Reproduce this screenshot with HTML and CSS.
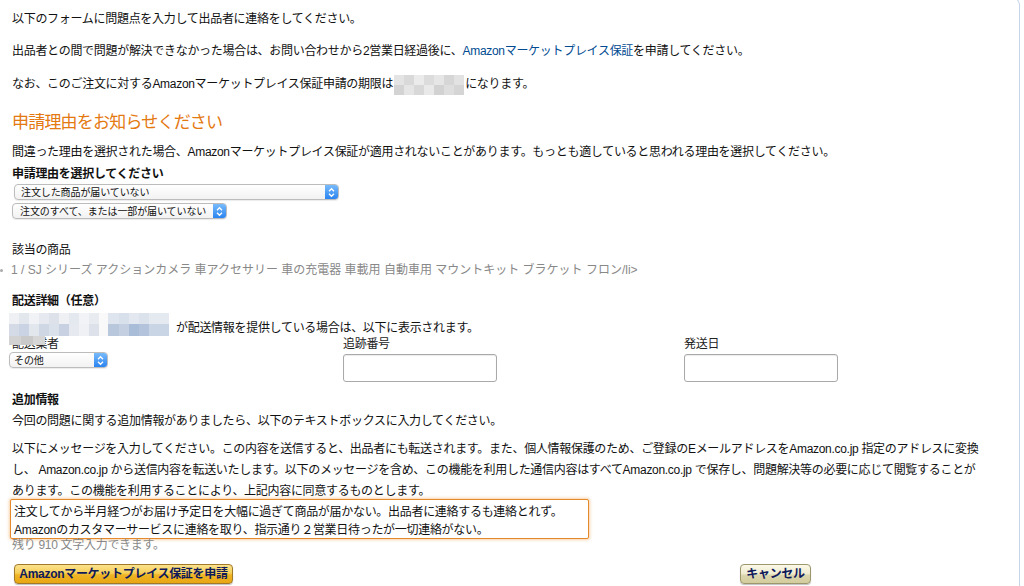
FILE: index.html
```html
<!DOCTYPE html>
<html lang="ja">
<head>
<meta charset="utf-8">
<title>Amazonマーケットプレイス保証</title>
<link rel="stylesheet" href="styles.css">
</head>
<body>
<div class="page">
  <p class="para">以下のフォームに問題点を入力して出品者に連絡をしてください。</p>
  <p class="para">出品者との間で問題が解決できなかった場合は、お問い合わせから2営業日経過後に、<a class="link" href="#">Amazonマーケットプレイス保証</a>を申請してください。</p>
  <p class="para">なお、このご注文に対するAmazonマーケットプレイス保証申請の期限は<span class="blur-date"></span>になります。</p>

  <h2 class="heading">申請理由をお知らせください</h2>
  <p class="note">間違った理由を選択された場合、Amazonマーケットプレイス保証が適用されないことがあります。もっとも適していると思われる理由を選択してください。</p>
  <p class="label-bold">申請理由を選択してください</p>
  <div class="select sel-reason"><span class="select-text">注文した商品が届いていない</span><span class="stepper"><svg viewBox="0 0 13 15" width="13" height="15"><path d="M4 6.2 L6.5 3.7 L9 6.2 M4 8.8 L6.5 11.3 L9 8.8" fill="none" stroke="#fff" stroke-width="1.3"/></svg></span></div>
  <div class="select sel-sub"><span class="select-text">注文のすべて、または一部が届いていない</span><span class="stepper"><svg viewBox="0 0 13 15" width="13" height="15"><path d="M4 6.2 L6.5 3.7 L9 6.2 M4 8.8 L6.5 11.3 L9 8.8" fill="none" stroke="#fff" stroke-width="1.3"/></svg></span></div>

  <p class="section-label">該当の商品</p>
  <p class="product"><span class="dot"></span>1 / SJ シリーズ アクションカメラ 車アクセサリー 車の充電器 車載用 自動車用 マウントキット ブラケット フロン/li&gt;</p>

  <p class="label-bold ship-title">配送詳細（任意）</p>
  <div class="seller-row">
    <span class="blur-name"></span>
    <span class="seller-text">が配送情報を提供している場合は、以下に表示されます。</span>
  </div>
  <div class="ship-grid">
    <div class="field carrier">
      <span class="field-label">配送業者</span>
      <span class="blur-label"></span>
      <div class="select sel-carrier"><span class="select-text">その他</span><span class="stepper"><svg viewBox="0 0 13 15" width="13" height="15"><path d="M4 6.2 L6.5 3.7 L9 6.2 M4 8.8 L6.5 11.3 L9 8.8" fill="none" stroke="#fff" stroke-width="1.3"/></svg></span></div>
    </div>
    <div class="field">
      <span class="field-label">追跡番号</span>
      <input class="text-input" type="text">
    </div>
    <div class="field">
      <span class="field-label">発送日</span>
      <input class="text-input" type="text">
    </div>
  </div>

  <p class="label-bold extra-title">追加情報</p>
  <p class="extra-note">今回の問題に関する追加情報がありましたら、以下のテキストボックスに入力してください。</p>
  <p class="message-note">以下にメッセージを入力してください。この内容を送信すると、出品者にも転送されます。また、個人情報保護のため、ご登録のEメールアドレスをAmazon.co.jp 指定のアドレスに変換<br>し、 Amazon.co.jp から送信内容を転送いたします。以下のメッセージを含め、この機能を利用した通信内容はすべてAmazon.co.jp で保存し、問題解決等の必要に応じて閲覧することが<br>あります。この機能を利用することにより、上記内容に同意するものとします。</p>
  <textarea class="message">注文してから半月経つがお届け予定日を大幅に過ぎて商品が届かない。出品者に連絡するも連絡とれず。
Amazonのカスタマーサービスに連絡を取り、指示通り２営業日待ったが一切連絡がない。</textarea>
  <p class="remaining">残り 910 文字入力できます。</p>

  <div class="actions">
    <button class="btn btn-primary" type="button">Amazonマーケットプレイス保証を申請</button>
    <button class="btn btn-cancel" type="button">キャンセル</button>
  </div>
</div>
</body>
</html>
```

FILE: styles.css
```css
html, body {
  margin: 0;
  padding: 0;
  background: #fff;
}

body {
  font-family: "Liberation Sans", "Noto Sans CJK JP", sans-serif;
  font-size: 12px;
  color: #111;
  overflow: hidden;
}

.page {
  width: 1020px;
  min-height: 600px;
  box-sizing: border-box;
  margin-top: -3px;
  padding: 13px 0 0 12px;
  border-top: 1px solid #c6d6ea;
  border-right: 1px solid #c6d6ea;
  border-top-right-radius: 8px;
  letter-spacing: -0.3px;
}

p {
  margin: 0;
  line-height: 16px;
}

.para {
  margin-bottom: 16px;
}

.link {
  color: #004b91;
  text-decoration: none;
}

.blur-date {
  display: inline-block;
  width: 70px;
  height: 20px;
  vertical-align: middle;
  margin: 0 1px;
  background:
    linear-gradient(90deg, #e4e4e4 0 10px, #d9d9d9 10px 20px, #ebebeb 20px 30px, #dcdcdc 30px 40px, #e6e6e6 40px 50px, #d6d6d6 50px 60px, #e2e2e2 60px 70px) top / 100% 10px no-repeat,
    linear-gradient(90deg, #d3d3d3 0 10px, #e5e5e5 10px 20px, #d8d8d8 20px 30px, #e9e9e9 30px 40px, #d2d2d2 40px 50px, #dedede 50px 60px, #d5d5d5 60px 70px) bottom / 100% 10px no-repeat;
}

.heading {
  margin: 17px 0 10px;
  font-size: 17px;
  font-weight: normal;
  line-height: 22px;
  letter-spacing: -0.8px;
  color: #e47911;
}

.note {
  margin-bottom: 6px;
}

.label-bold {
  font-weight: bold;
}

/* Mac style popup select */
.select {
  display: flex;
  align-items: center;
  box-sizing: border-box;
  height: 16px;
  border: 1px solid #bcbcbc;
  border-radius: 4px;
  background: linear-gradient(#ffffff, #f2f2f2);
  box-shadow: 0 1px 1px rgba(0, 0, 0, 0.08);
  overflow: hidden;
  font-family: "Noto Sans CJK JP", "Liberation Sans", sans-serif;
  font-size: 10px;
  letter-spacing: -0.1px;
  color: #111;
}

.select-text {
  flex: 1;
  line-height: 14px;
  white-space: nowrap;
}

.stepper {
  display: flex;
  align-items: center;
  justify-content: center;
  width: 13px;
  align-self: stretch;
  background: linear-gradient(#78bbfb, #2a84f0);
}

.sel-reason {
  width: 325px;
  margin: 2px 0 0 2px;
  padding-left: 6px;
}

.sel-sub {
  width: 215px;
  margin-top: 3px;
  padding-left: 7px;
}

.section-label {
  margin-top: 23px;
}

.product {
  margin: 4px 0 0 -12px;
  color: #888;
  white-space: nowrap;
  letter-spacing: 0;
}

.dot {
  display: inline-block;
  width: 3px;
  height: 3px;
  margin: 0 8px 0 0;
  vertical-align: middle;
  border-radius: 50%;
  background: #aaa;
}

.ship-title {
  margin-top: 15px;
}

.seller-row {
  display: flex;
  align-items: flex-end;
  margin: 4px 0 0 -3px;
}

.blur-name {
  width: 160px;
  height: 23px;
  background:
    linear-gradient(90deg, #eef0f4 0 10px, #e2e6ed 10px 20px, #f0f2f5 20px 30px, #e6eaf0 30px 40px, #dde2ea 40px 50px, #eef0f4 50px 60px, #e4e8ef 60px 70px, #f2f3f6 70px 80px, #e8ebf0 80px 90px, #f9f9fa 90px 99px, #dfe5ee 99px 110px, #d8e0eb 110px 120px, #e3e8f0 120px 130px, #dbe2ec 130px 140px, #e5e9f0 140px 160px) top / 100% 11px no-repeat,
    linear-gradient(90deg, #d4dbe7 0 10px, #c9d3e3 10px 20px, #e2e6ed 20px 30px, #cfd7e5 30px 40px, #dbe1ea 40px 50px, #c7d1e1 50px 60px, #e6e9ef 60px 70px, #f0f1f4 70px 80px, #dde2ea 80px 90px, #f9f9fa 90px 99px, #b9c7dc 99px 110px, #c4d0e2 110px 120px, #a9bcd8 120px 130px, #b3c3dc 130px 140px, #c9d4e5 140px 160px) bottom / 100% 12px no-repeat;
}

.seller-text {
  margin-left: 7px;
  line-height: 16px;
}

.ship-grid {
  display: grid;
  grid-template-columns: 331px 341px 160px;
  margin-top: 0;
}

.field {
  display: flex;
  flex-direction: column;
  align-items: flex-start;
}

.carrier {
  position: relative;
}

.field-label {
  line-height: 16px;
  color: #222;
}

.blur-label {
  position: absolute;
  top: 0;
  left: -3px;
  width: 36px;
  height: 9px;
  background: linear-gradient(90deg, #d2d2d2 0 12px, #c9c9c9 12px 24px, #d6d6d6 24px 36px);
}

.sel-carrier {
  width: 99px;
  margin: 0 0 0 -3px;
  padding-left: 4px;
}

.text-input {
  box-sizing: border-box;
  width: 154px;
  height: 28px;
  margin-top: 2px;
  border: 1px solid #a9a9a9;
  border-radius: 3px;
  box-shadow: inset 0 1px 1px rgba(0, 0, 0, 0.08);
  background: #fff;
}

.extra-title {
  margin-top: 10px;
}

.extra-note {
  margin-top: 5px;
}

.message-note {
  margin-top: 10px;
  line-height: 21px;
  white-space: nowrap;
}

.message {
  display: block;
  box-sizing: border-box;
  width: 579px;
  height: 40px;
  margin: -3px 0 0 -2px;
  padding: 3px 3px;
  border: 1px solid #e48a2c;
  border-radius: 2px;
  box-shadow: 0 0 3px 1px rgba(240, 150, 60, 0.45);
  font: inherit;
  letter-spacing: inherit;
  line-height: 18px;
  color: #111;
  resize: none;
  overflow: hidden;
  outline: none;
}

.remaining {
  line-height: 12px;
  color: #888;
}

.actions {
  display: flex;
  align-items: center;
  margin: 13px 0 0 2px;
}

.btn {
  box-sizing: border-box;
  height: 20px;
  padding: 0;
  border-radius: 4px;
  font-family: "Liberation Sans", "Noto Sans CJK JP", sans-serif;
  font-size: 12px;
  font-weight: bold;
  letter-spacing: -0.3px;
  color: #0e1a5a;
  line-height: 18px;
}

.btn-primary {
  width: 219px;
  border: 1px solid #a07a28;
  background: linear-gradient(#fbe28d 0%, #f6cf58 45%, #efb524 55%, #e9a614 100%);
  box-shadow: 0 1px 1px rgba(0, 0, 0, 0.25);
}

.btn-cancel {
  width: 71px;
  margin-left: 507px;
  border: 1px solid #9c976c;
  background: linear-gradient(#fbf9e8 0%, #eeead0 50%, #dcd6ae 55%, #d3cc9e 100%);
  box-shadow: 0 1px 1px rgba(0, 0, 0, 0.25);
}
```
